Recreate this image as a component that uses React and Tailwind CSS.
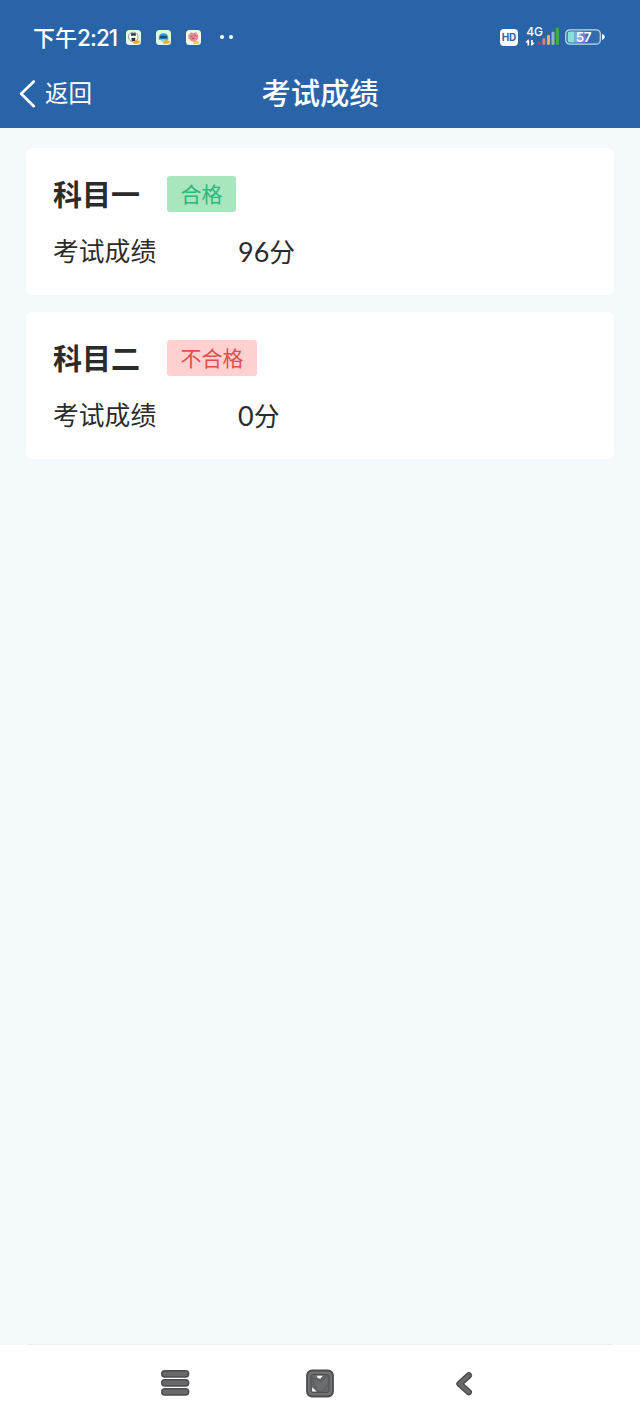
const results = [
    { name: '科目一', status: '合格', passed: true, score: '96' },
    { name: '科目二', status: '不合格', passed: false, score: '0' },
];

// Small notification app icons, each one a face on a pale tile
function PandaIcon() {
    return (
        <svg viewBox="0 0 15 15" className="w-[15px] h-[15px]">
            <rect width="15" height="15" rx="3.5" fill="#e9f8e8" />
            <circle cx="7.3" cy="7" r="4.8" fill="#fff" stroke="#93a4a4" strokeWidth="1" />
            <path d="M5 3.2h4.8v2.6H5zM5.6 7.8h3.6v3.2H5.6z" fill="#26343f" />
            <circle cx="7.4" cy="6.8" r="1" fill="#fff" />
            <path d="M6.8 12.2l2.6-1.4 1.4-1.4 1.4 1.4 2 .2-1.3 2.5-5 .4z" fill="#edaf2a" />
        </svg>
    );
}

function RobotIcon() {
    return (
        <svg viewBox="0 0 15 15" className="w-[15px] h-[15px]">
            <rect width="15" height="15" rx="3.5" fill="#e3f8e4" />
            <path d="M2.8 7.5c0-5.6 9.4-5.6 9.4 0v2.3H2.8z" fill="#3a9bcd" />
            <rect x="4" y="5.7" width="7" height="2.8" rx="1" fill="#174f7c" />
            <path d="M4 9.6h6v2.2H5.5z" fill="#8fd0e2" />
            <path d="M6.8 12.2l2.6-1.4 1.4-1.4 1.4 1.4 2 .2-1.3 2.5-5 .4z" fill="#edaf2a" />
        </svg>
    );
}

function BlossomIcon() {
    return (
        <svg viewBox="0 0 15 15" className="w-[15px] h-[15px]">
            <rect width="15" height="15" rx="3.5" fill="#f4f8e8" />
            <path d="M2.5 5l2.3-2.4L7.5 3l2.8-.7 2 3.2-.2 3.3-3 3.1-4-.8L2.3 8z" fill="#ea8b9d" />
            <path d="M4.5 5.8l2 1M8.5 5l1.8 1.2M5.5 9l3-1" stroke="#b7405b" strokeWidth="1" />
            <path d="M7 12.4l3-1.8 2 .9 1.7-.2-1.3 2.4-5 .2z" fill="#e9d13f" />
        </svg>
    );
}

function SignalIcon() {
    return (
        <svg viewBox="0 0 35 24" className="w-[35px] h-6" fill="none">
            <text x="1.2" y="10.5" fontSize="12" fontWeight="500" fill="#fff" fontFamily="Inter, sans-serif">4G</text>
            <path d="M3.3 20.5v-5M6.9 15v5" stroke="#fff" strokeWidth="1.7" />
            <path d="M.3 17.6L3.6 14v3.6zM6.4 21.3v-3.6h3.4z" fill="#fff" />
            <g strokeWidth="3" strokeLinecap="round">
                <path d="M14.2 18.6v-.6" stroke="#b94264" />
                <path d="M18.9 18.6v-4.2" stroke="#f1786d" />
                <path d="M23.5 18.6v-7.4" stroke="#f2aa55" />
                <path d="M28 18.6V8" stroke="#8fb8b4" />
                <path d="M32.4 18.6V3.8" stroke="#3aae49" />
            </g>
        </svg>
    );
}

function BatteryIcon() {
    return (
        <svg viewBox="0 0 40 16" className="w-10 h-4">
            <rect x=".8" y=".8" width="34.5" height="14.4" rx="4" fill="#356cac" stroke="#b9d9ef" strokeWidth="1.3" />
            <path d="M4.8 2.5h4.7v11H4.8a2 2 0 01-2-2v-7a2 2 0 012-2z" fill="#87e0dc" />
            <path d="M9.5 2.5h7v11h-7z" fill="#7daee3" />
            <path d="M16.5 2.5h4.3v11h-4.3z" fill="#8272df" />
            <path d="M37 5c2 .6 2.7 1.6 2.7 2.8S39 10.4 37 11z" fill="#fff" />
            <text x="18.4" y="12.9" textAnchor="middle" fontSize="13.5" fontWeight="600" fill="#fff" fontFamily="Inter, sans-serif" letterSpacing="-0.4">57</text>
        </svg>
    );
}

function StatusBar() {
    return (
        <div className="flex h-[60px] items-center pt-[14px] pl-[33px] pr-[35px]">
            <span className="w-[93px] whitespace-nowrap pt-[2px] text-[22px] font-medium leading-none">
                下午<span className="text-[22.5px] tracking-[-0.9px]">2:21</span>
            </span>
            <div className="flex items-center gap-[15px]">
                <PandaIcon />
                <RobotIcon />
                <BlossomIcon />
            </div>
            <div className="ml-[19px] flex gap-[5px]">
                <span className="h-1 w-1 rounded-full bg-white" />
                <span className="h-1 w-1 rounded-full bg-white" />
            </div>
            <div className="ml-auto flex items-center">
                <span className="flex h-[17px] w-[18px] items-center justify-center rounded-[4px] bg-white text-[10px] font-bold text-[#2a64a8]">
                    HD
                </span>
                <span className="ml-[7px]"><SignalIcon /></span>
                <span className="ml-[5px]"><BatteryIcon /></span>
            </div>
        </div>
    );
}

function ResultCard({ name, status, passed, score }) {
    return (
        <section className="h-[147px] rounded-md bg-white px-[27px] pt-[28px]">
            <div className="flex h-9 items-center">
                <h2 className="w-[114px] pt-[3px] text-[29px] font-bold leading-none">{name}</h2>
                <span
                    className={`flex h-9 items-center rounded-[3px] px-[13.5px] text-[21px] leading-none ${
                        passed ? 'bg-[#a8e6bf] text-[#2eb67c]' : 'bg-[#ffd0d0] text-[#df4e4e]'
                    }`}
                >
                    {status}
                </span>
            </div>
            <div className="mt-[21.5px] flex items-center text-[25.8px] leading-[36px]">
                <span className="w-[185px]">考试成绩</span>
                <span>
                    <span className="font-['Lato'] text-[27px]">{score}</span>分
                </span>
            </div>
        </section>
    );
}

function NavigationBar() {
    return (
        <footer className="flex h-[77px] items-center justify-center bg-white">
            <div className="grid w-[434px] grid-cols-3 justify-items-center">
                <svg viewBox="0 0 30 28" className="w-[30px] h-7" fill="#69696c" stroke="#4c4c4f" strokeWidth="1.4">
                    <rect x="1.7" y="1.7" width="27" height="6.3" rx="3.1" />
                    <rect x="1.7" y="10.7" width="27" height="6.3" rx="3.1" />
                    <rect x="1.7" y="19.7" width="27" height="6.3" rx="3.1" />
                </svg>
                <svg viewBox="0 0 30 30" className="w-[30px] h-[30px]">
                    <rect x="2" y="1.5" width="26" height="26" rx="5" fill="#707173" stroke="#4c4d50" strokeWidth="1.8" />
                    <rect x="6" y="5.5" width="18" height="18" rx="2" fill="#66676b" stroke="#4c4d50" strokeWidth="1" />
                    <path d="M7 9.5l5 1.2 4 2L22 6.5l1.5 3-.5 6-6 7h-4z" fill="#6c6d71" stroke="#54555a" strokeWidth=".8" />
                    <path d="M11.5 6.8h6.2l-2.4 2.9-2.5-.8zM7.2 18.2v4.3h4.4z" fill="#fff" />
                </svg>
                <svg viewBox="0 0 24 30" className="w-6 h-[30px]" fill="none" strokeLinecap="round" strokeLinejoin="round">
                    <path d="M15.8 6.5L6.5 14.8l9.3 8.3" stroke="#4c4c4f" strokeWidth="6.4" />
                    <path d="M15.8 6.5L6.5 14.8l9.3 8.3" stroke="#69696c" strokeWidth="3.6" />
                </svg>
            </div>
        </footer>
    );
}

export default function App() {
    return (
        <div className="flex h-[1422px] w-[640px] flex-col bg-[#f4f9fb] font-['Inter','Noto_Sans_CJK_SC',sans-serif] text-[#2b2b2b]">
            <header className="h-[128px] bg-[#2a64a8] text-white">
                <StatusBar />
                <div className="grid h-[67px] grid-cols-[1fr_auto_1fr] items-center">
                    <button className="flex items-center pl-[18px] text-[23.5px] leading-none">
                        <svg viewBox="0 0 18 28" className="mr-[9px] w-[18px] h-7" fill="none" stroke="currentColor" strokeWidth="2.6" strokeLinecap="round" strokeLinejoin="round">
                            <path d="M15.8 1.5L3.2 13.8l12.6 12.4" />
                        </svg>
                        <span className="pt-px">返回</span>
                    </button>
                    <h1 className="text-[29.3px] font-medium leading-none">考试成绩</h1>
                </div>
            </header>
            <main className="flex flex-1 flex-col gap-[17px] px-[26px] pt-5">
                {results.map((item) => (
                    <ResultCard key={item.name} {...item} />
                ))}
            </main>
            <div className="mx-7 h-px bg-[#e9edef]" />
            <NavigationBar />
        </div>
    );
}
